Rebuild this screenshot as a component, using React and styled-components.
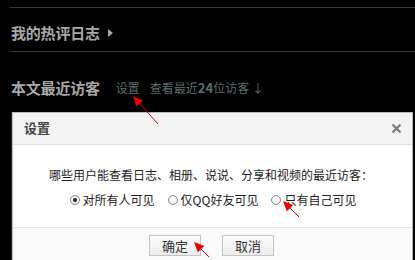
import React from "react";
import styled, { createGlobalStyle } from "styled-components";

const Global = createGlobalStyle`
  html, body { margin: 0; padding: 0; background: #000; }
  body { font-family: "Noto Sans CJK SC", "Noto Sans", sans-serif; }
  * { box-sizing: border-box; }
`;

const Page = styled.div`
  position: relative;
  width: 415px;
  height: 260px;
  overflow: hidden;
  background: #000;
  padding-top: 7px;
`;

const Rule = styled.div`
  margin-left: 10px;
  height: 1px;
  background: #3a3a3a;
`;

const Heading = styled.div`
  display: flex;
  gap: 8px;
  height: ${(p) => p.$h}px;
  padding: ${(p) => p.$pt}px 0 0 11px;
  align-items: flex-start;
`;

const HeadText = styled.span`
  font-size: 15px;
  line-height: 20px;
  font-weight: bold;
  color: #a8a8a8;
  letter-spacing: -0.2px;
`;

const Caret = styled.span`
  margin-top: 6px;
  width: 0;
  height: 0;
  border-top: 4px solid transparent;
  border-bottom: 4px solid transparent;
  border-left: 5px solid #a8a8a8;
`;

const Link = styled.span`
  font-size: 12px;
  line-height: 20px;
  color: #5e6e6e;
  margin-left: ${(p) => p.$ml}px;
  b { font-weight: bold; color: #5a7070; font-size: 13px; }
`;

const Dialog = styled.div`
  margin: 14px 0 0 12px;
  width: 401px;
  height: 160px;
  background: #fff;
  border: 1px solid #b8b8b8;
  box-shadow: -1px 0 0 #2a2a2a;
  display: flex;
  flex-direction: column;
`;

const TitleBar = styled.div`
  height: 32px;
  flex: none;
  background: #f3f3f3;
  border-bottom: 1px solid #e2e2e2;
  display: flex;
  align-items: center;
  justify-content: space-between;
  padding: 0 10px 3px 11px;
`;

const Title = styled.span`
  font-size: 13px;
  font-weight: bold;
  color: #444;
`;

const CloseIcon = styled.svg`
  display: block;
  margin-top: 2px;
`;

const Body = styled.div`
  height: 83px;
  flex: none;
  display: flex;
  flex-direction: column;
  align-items: center;
  padding-top: 21px;
  gap: 7px;
  border-bottom: 1px solid #e4e4e4;
`;

const Question = styled.div`
  font-size: 12px;
  line-height: 18px;
  color: #222;
  padding-right: 3px;
`;

const Options = styled.div`
  display: flex;
  gap: 13px;
  padding-left: 1px;
`;

const Option = styled.label`
  display: flex;
  align-items: center;
  gap: 3px;
  font-size: 12px;
  line-height: 18px;
  color: #222;
`;

const Radio = styled.span`
  width: 10px;
  height: 10px;
  border-radius: 50%;
  border: 1px solid #8a8a8a;
  background: radial-gradient(circle at 50% 40%, #fff 0%, #e6e6e6 100%);
  display: flex;
  align-items: center;
  justify-content: center;
  &::after {
    content: "";
    width: 4px;
    height: 4px;
    border-radius: 50%;
    background: ${(p) => (p.$checked ? "#222" : "transparent")};
  }
`;

const Footer = styled.div`
  flex: 1;
  background: #fafafa;
  display: flex;
  justify-content: center;
  gap: 21px;
  padding-top: 7px;
  padding-right: 2px;
`;

const Button = styled.button`
  width: 52px;
  height: 21px;
  border: 1px solid #c4c4c4;
  background: linear-gradient(#fcfcfc, #ececec);
  font-family: "Noto Sans CJK SC", sans-serif;
  font-size: 13px;
  color: #333;
  padding: 0;
  line-height: 19px;
`;

const Overlay = styled.svg`
  position: absolute;
  left: 0;
  top: 0;
  pointer-events: none;
`;

function Arrow({ tip, tail }) {
  const [tx, ty] = tip;
  const [sx, sy] = tail;
  const ang = Math.atan2(sy - ty, sx - tx);
  const len = 10;
  const w = 4.5;
  const bx = tx + Math.cos(ang) * len;
  const by = ty + Math.sin(ang) * len;
  const px = -Math.sin(ang) * w;
  const py = Math.cos(ang) * w;
  return (
    <g>
      <line x1={bx} y1={by} x2={sx} y2={sy} stroke="#d00" strokeWidth="1" />
      <polygon
        points={`${tx},${ty} ${bx + px},${by + py} ${bx - px},${by - py}`}
        fill="#e00"
      />
    </g>
  );
}

export default function App() {
  return (
    <>
      <Global />
      <Page>
        <Rule />
        <Heading $h={43} $pt={15}>
          <HeadText>我的热评日志</HeadText>
          <Caret />
        </Heading>
        <Rule />
        <Heading $h={46} $pt={26}>
          <HeadText>本文最近访客</HeadText>
          <Link $ml={8}>设置</Link>
          <Link $ml={2}>
            查看最近<b>24</b>位访客 ↓
          </Link>
        </Heading>
        <Dialog>
          <TitleBar>
            <Title>设置</Title>
            <CloseIcon width="11" height="11" viewBox="0 0 11 11">
              <path d="M1.5 1.5 L9.5 9.5 M9.5 1.5 L1.5 9.5" stroke="#7a7a7a" strokeWidth="2.2" />
            </CloseIcon>
          </TitleBar>
          <Body>
            <Question>哪些用户能查看日志、相册、说说、分享和视频的最近访客：</Question>
            <Options>
              <Option>
                <Radio $checked />
                对所有人可见
              </Option>
              <Option>
                <Radio />
                仅QQ好友可见
              </Option>
              <Option>
                <Radio />
                只有自己可见
              </Option>
            </Options>
          </Body>
          <Footer>
            <Button>确定</Button>
            <Button>取消</Button>
          </Footer>
        </Dialog>
        <Overlay width="415" height="260" viewBox="0 0 415 260">
          <Arrow tip={[133, 96]} tail={[158, 124]} />
          <Arrow tip={[194, 242]} tail={[209, 257]} />
          <Arrow tip={[283, 201]} tail={[299, 217]} />
        </Overlay>
      </Page>
    </>
  );
}
